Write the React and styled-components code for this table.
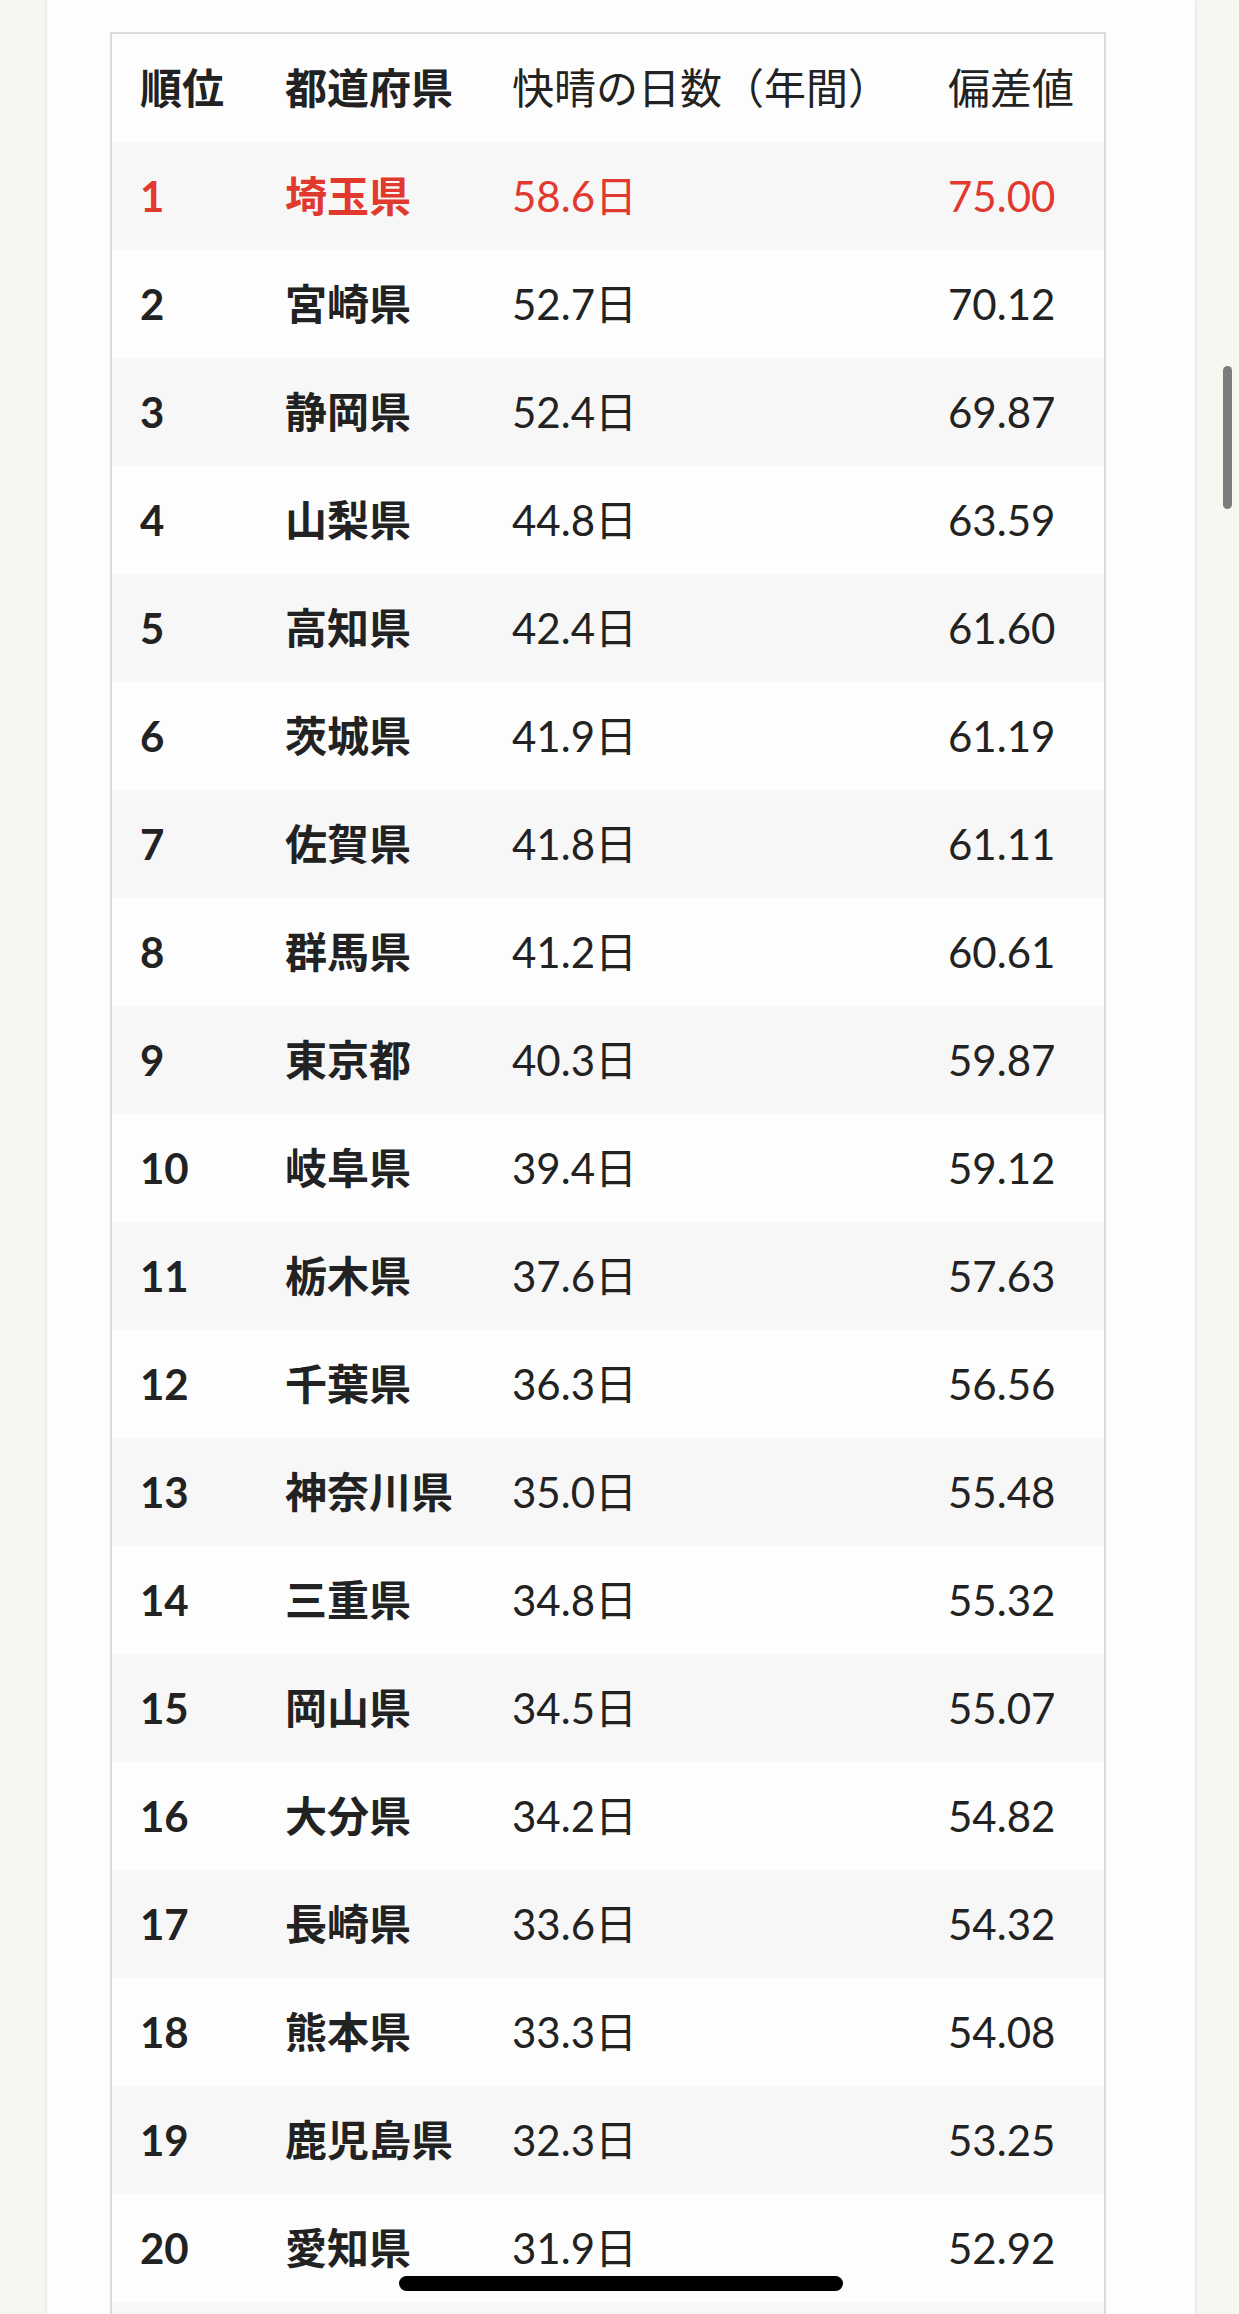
import React from "react";
import styled, { createGlobalStyle } from "styled-components";

const GlobalStyle = createGlobalStyle`
  html, body {
    margin: 0;
    padding: 0;
    background: #f7f7f2;
    overflow: hidden;
  }
  * { box-sizing: border-box; }
`;

const Page = styled.div`
  height: 2314px;
  overflow: hidden;
  display: flex;
  padding-left: 47px;
  padding-right: 44px;
  font-family: "Lato", "Noto Sans CJK JP", sans-serif;
  color: #222;
`;

const Card = styled.main`
  flex: 1;
  background: #fdfdfd;
  box-shadow: 0 0 4px rgba(0, 0, 0, 0.13);
  padding: 32px 0 0 63px;
`;

const TableFrame = styled.div`
  width: 996px;
  border: 2px solid #dcdcdc;
  border-bottom: none;
`;

const Table = styled.table`
  width: 100%;
  border-collapse: collapse;
  table-layout: fixed;
`;

const Row = styled.tr`
  height: 108px;
  background: ${(p) => (p.$shade ? "#f7f7f7" : "#fdfdfd")};
  color: ${(p) => (p.$top ? "#e2392f" : "#222")};
`;

const HeadCell = styled.th`
  padding: 0 0 0 28px;
  text-align: left;
  font-size: 42px;
  line-height: 1;
  font-weight: ${(p) => (p.$bold ? 700 : 400)};
  white-space: nowrap;
`;

const Cell = styled.td`
  padding: 0 0 0 28px;
  font-size: 42px;
  line-height: 1;
  font-weight: ${(p) => (p.$bold ? 700 : 400)};
  white-space: nowrap;
`;

const ScrollThumb = styled.div`
  position: fixed;
  left: 1223px;
  top: 366px;
  width: 9px;
  height: 143px;
  border-radius: 5px;
  background: #7c7c7c;
`;

const HomeIndicator = styled.div`
  position: fixed;
  left: 399px;
  top: 2276px;
  width: 444px;
  height: 15px;
  border-radius: 8px;
  background: #000;
`;

const rows = [
  ["1", "埼玉県", "58.6日", "75.00"],
  ["2", "宮崎県", "52.7日", "70.12"],
  ["3", "静岡県", "52.4日", "69.87"],
  ["4", "山梨県", "44.8日", "63.59"],
  ["5", "高知県", "42.4日", "61.60"],
  ["6", "茨城県", "41.9日", "61.19"],
  ["7", "佐賀県", "41.8日", "61.11"],
  ["8", "群馬県", "41.2日", "60.61"],
  ["9", "東京都", "40.3日", "59.87"],
  ["10", "岐阜県", "39.4日", "59.12"],
  ["11", "栃木県", "37.6日", "57.63"],
  ["12", "千葉県", "36.3日", "56.56"],
  ["13", "神奈川県", "35.0日", "55.48"],
  ["14", "三重県", "34.8日", "55.32"],
  ["15", "岡山県", "34.5日", "55.07"],
  ["16", "大分県", "34.2日", "54.82"],
  ["17", "長崎県", "33.6日", "54.32"],
  ["18", "熊本県", "33.3日", "54.08"],
  ["19", "鹿児島県", "32.3日", "53.25"],
  ["20", "愛知県", "31.9日", "52.92"],
  ["", "", "", ""],
];

export default function App() {
  return (
    <>
      <GlobalStyle />
      <Page>
        <Card>
          <TableFrame>
            <Table>
              <colgroup>
                <col style={{ width: 145 }} />
                <col style={{ width: 227 }} />
                <col style={{ width: 436 }} />
                <col style={{ width: 184 }} />
              </colgroup>
              <thead>
                <Row>
                  <HeadCell $bold>順位</HeadCell>
                  <HeadCell $bold>都道府県</HeadCell>
                  <HeadCell>快晴の日数（年間）</HeadCell>
                  <HeadCell>偏差値</HeadCell>
                </Row>
              </thead>
              <tbody>
                {rows.map((r, i) => (
                  <Row key={i} $shade={i % 2 === 0} $top={i === 0}>
                    <Cell $bold>{r[0]}</Cell>
                    <Cell $bold>{r[1]}</Cell>
                    <Cell>{r[2]}</Cell>
                    <Cell>{r[3]}</Cell>
                  </Row>
                ))}
              </tbody>
            </Table>
          </TableFrame>
        </Card>
      </Page>
      <ScrollThumb />
      <HomeIndicator />
    </>
  );
}
